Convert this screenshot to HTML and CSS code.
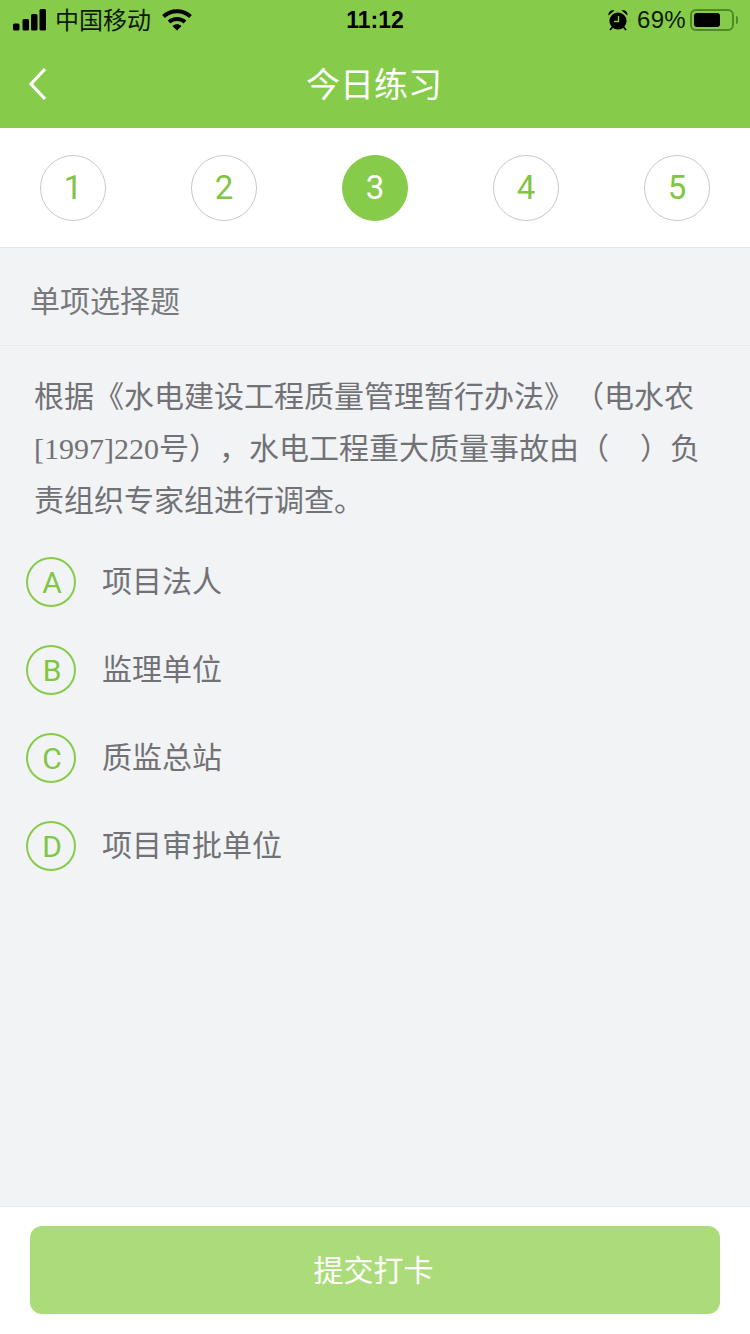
FILE: index.html
```html
<!DOCTYPE html>
<html lang="zh-CN">
<head>
<meta charset="utf-8">
<title>今日练习</title>
<link rel="stylesheet" href="styles.css">
</head>
<body>
<div class="page">
  <header class="top">
    <div class="status">
      <div class="status-left">
        <svg class="signal" width="34" height="22" viewBox="0 0 34 22"><rect x="0" y="14.500" width="6.500" height="7" rx="1.500"/><rect x="9.500" y="10" width="6.500" height="11.500" rx="1.500"/><rect x="18" y="5" width="6.500" height="16.500" rx="1.500"/><rect x="26.500" y="0" width="6.500" height="21.500" rx="1.500"/></svg>
        <span class="carrier">中国移动</span>
        <svg class="wifi" width="30" height="22" viewBox="0 0 30 22"><path d="M1.500 7.500C9 .5 21 .5 28.500 7.500" fill="none" stroke="#000" stroke-width="4"/><path d="M7 13C11.500 9 18.500 9 23 13" fill="none" stroke="#000" stroke-width="4"/><path d="M10.500 17C13 14.800 17 14.800 19.500 17L15 21.500Z"/></svg>
      </div>
      <div class="status-time">11:12</div>
      <div class="status-right">
        <svg class="alarm" width="20" height="22" viewBox="0 0 20 22"><circle cx="10" cy="12" r="8.600"/><path d="M.5 6.500C0 2.500 3.500 .5 6.500 1.500ZM19.500 6.500C20 2.500 16.500 .5 13.500 1.500Z"/><path d="M4.500 18l-2.500 3M15.500 18l2.500 3" stroke="#000" stroke-width="1.800"/><path d="M10.500 7v5.500h-4.500" fill="none" stroke="#86cc4a" stroke-width="1.400"/></svg>
        <span class="battery-text">69%</span>
        <div class="battery"><div class="battery-fill"></div></div>
        <div class="battery-cap"></div>
      </div>
    </div>
    <div class="nav">
      <svg class="back" width="20" height="34" viewBox="0 0 20 34"><path d="M18 2L4 17l14 15" fill="none" stroke="#fff" stroke-width="3.200"/></svg>
      <h1 class="title">今日练习</h1>
    </div>
  </header>

  <nav class="steps">
    <div class="step">1</div>
    <div class="step">2</div>
    <div class="step step-on">3</div>
    <div class="step">4</div>
    <div class="step">5</div>
  </nav>

  <main class="body">
    <div class="kind">单项选择题</div>
    <p class="question">根据《水电建设工程质量管理暂行办法》（电水农<br><span class="serif">[1997]220</span>号），水电工程重大质量事故由（<span class="blank"></span>）负<br>责组织专家组进行调查。</p>
    <ul class="options">
      <li class="option"><span class="letter">A</span><span class="label">项目法人</span></li>
      <li class="option"><span class="letter">B</span><span class="label">监理单位</span></li>
      <li class="option"><span class="letter">C</span><span class="label">质监总站</span></li>
      <li class="option"><span class="letter">D</span><span class="label">项目审批单位</span></li>
    </ul>
  </main>

  <footer class="foot">
    <button class="submit" type="button">提交打卡</button>
  </footer>
</div>
</body>
</html>
```
FILE: styles.css
```css
* { box-sizing: border-box; }
html, body { margin: 0; padding: 0; }
body {
  width: 750px;
  height: 1334px;
  overflow: hidden;
  font-family: "Liberation Sans", "Noto Sans CJK SC", sans-serif;
  background: #f2f3f5;
  text-spacing-trim: space-all;
}
.page { display: flex; flex-direction: column; height: 1334px; }

.top { background: #86cc4a; height: 128px; flex: none; }
.status {
  height: 40px;
  padding: 0 12px 0 13px;
  display: flex;
  align-items: center;
  position: relative;
  color: #000;
}
.status-left { display: flex; align-items: center; }
.carrier { font-size: 24px; margin-left: 8px; line-height: 40px; margin-top: 1px; color: #0c1a04; }
.wifi { margin-left: 11px; }
.status-time {
  position: absolute;
  left: 0;
  right: 0;
  text-align: center;
  font-size: 23px;
  font-weight: 700;
  line-height: 40px;
}
.status-right { margin-left: auto; display: flex; align-items: center; }
.alarm { margin-top: -1px; }
.battery-text { font-size: 24px; margin-left: 9px; line-height: 40px; letter-spacing: 0.3px; color: #0c1a04; }
.battery {
  width: 44px;
  height: 22px;
  margin-left: 4px;
  border: 2px solid #4f8a26;
  border-radius: 6px;
  padding: 2px;
  margin-top: -1px;
}
.battery-fill { width: 26px; height: 14px; background: #000; border-radius: 3px; }
.battery-cap { width: 2px; height: 8px; margin-left: 2px; background: #4f8a26; border-radius: 0 2px 2px 0; margin-top: -1px; }

.nav { height: 88px; display: flex; align-items: center; justify-content: center; position: relative; }
.back { position: absolute; left: 27px; top: 27px; }
.title { margin: -2px 2px 0 0; font-size: 34px; font-weight: 400; color: #fff; line-height: 88px; font-family: "Noto Sans CJK SC", sans-serif; }

.steps {
  height: 120px;
  flex: none;
  background: #fff;
  border-bottom: 1px solid #e6e6e6;
  padding: 0 40px;
  display: flex;
  align-items: center;
  justify-content: space-between;
}
.step {
  width: 66px;
  height: 66px;
  border-radius: 50%;
  border: 1px solid #c9c9c9;
  color: #7fc644;
  font-family: Roboto, sans-serif;
  font-weight: 400;
  font-size: 33px;
  display: flex;
  align-items: center;
  justify-content: center;
}
.step-on { background: #86cc4a; border-color: #86cc4a; color: #fff; }

.body { flex: 1; min-height: 0; }
.kind {
  height: 98px;
  padding: 0 30px;
  border-bottom: 1px solid #e6e7e9;
  font-size: 30px;
  line-height: 103px;
  color: #77797c;
  font-family: "Noto Sans CJK SC", sans-serif;
}
.question {
  margin: 0;
  padding: 22px 34px 0;
  font-family: "Noto Sans CJK SC", sans-serif;
  font-size: 30px;
  line-height: 52px;
  color: #717275;
  white-space: nowrap;
}
.serif { font-family: "Liberation Serif", serif; line-height: 0; }
.blank { display: inline-block; width: 31px; }
.options { list-style: none; margin: 0; padding: 33px 0 0 26px; display: flex; flex-direction: column; gap: 38px; }
.option { display: flex; align-items: center; height: 50px; }
.letter {
  width: 50px;
  height: 50px;
  border-radius: 50%;
  border: 2px solid #86cc4a;
  color: #7fc644;
  font-family: Roboto, sans-serif;
  font-weight: 400;
  font-size: 30px;
  padding-left: 2px;
  display: flex;
  align-items: center;
  justify-content: center;
}
.label {
  margin-left: 26px;
  padding-bottom: 7px;
  font-size: 30px;
  color: #717275;
  font-family: "Noto Sans CJK SC", sans-serif;
}

.foot {
  height: 128px;
  flex: none;
  background: #fff;
  border-top: 1px solid #e8e9eb;
  padding: 19px 30px 0;
}
.submit {
  display: block;
  width: 690px;
  height: 88px;
  border: 0;
  border-radius: 12px;
  background: #abdc79;
  color: #fff;
  padding: 0 3px 4px 0;
  font-size: 30px;
  font-family: "Noto Sans CJK SC", sans-serif;
}
```
